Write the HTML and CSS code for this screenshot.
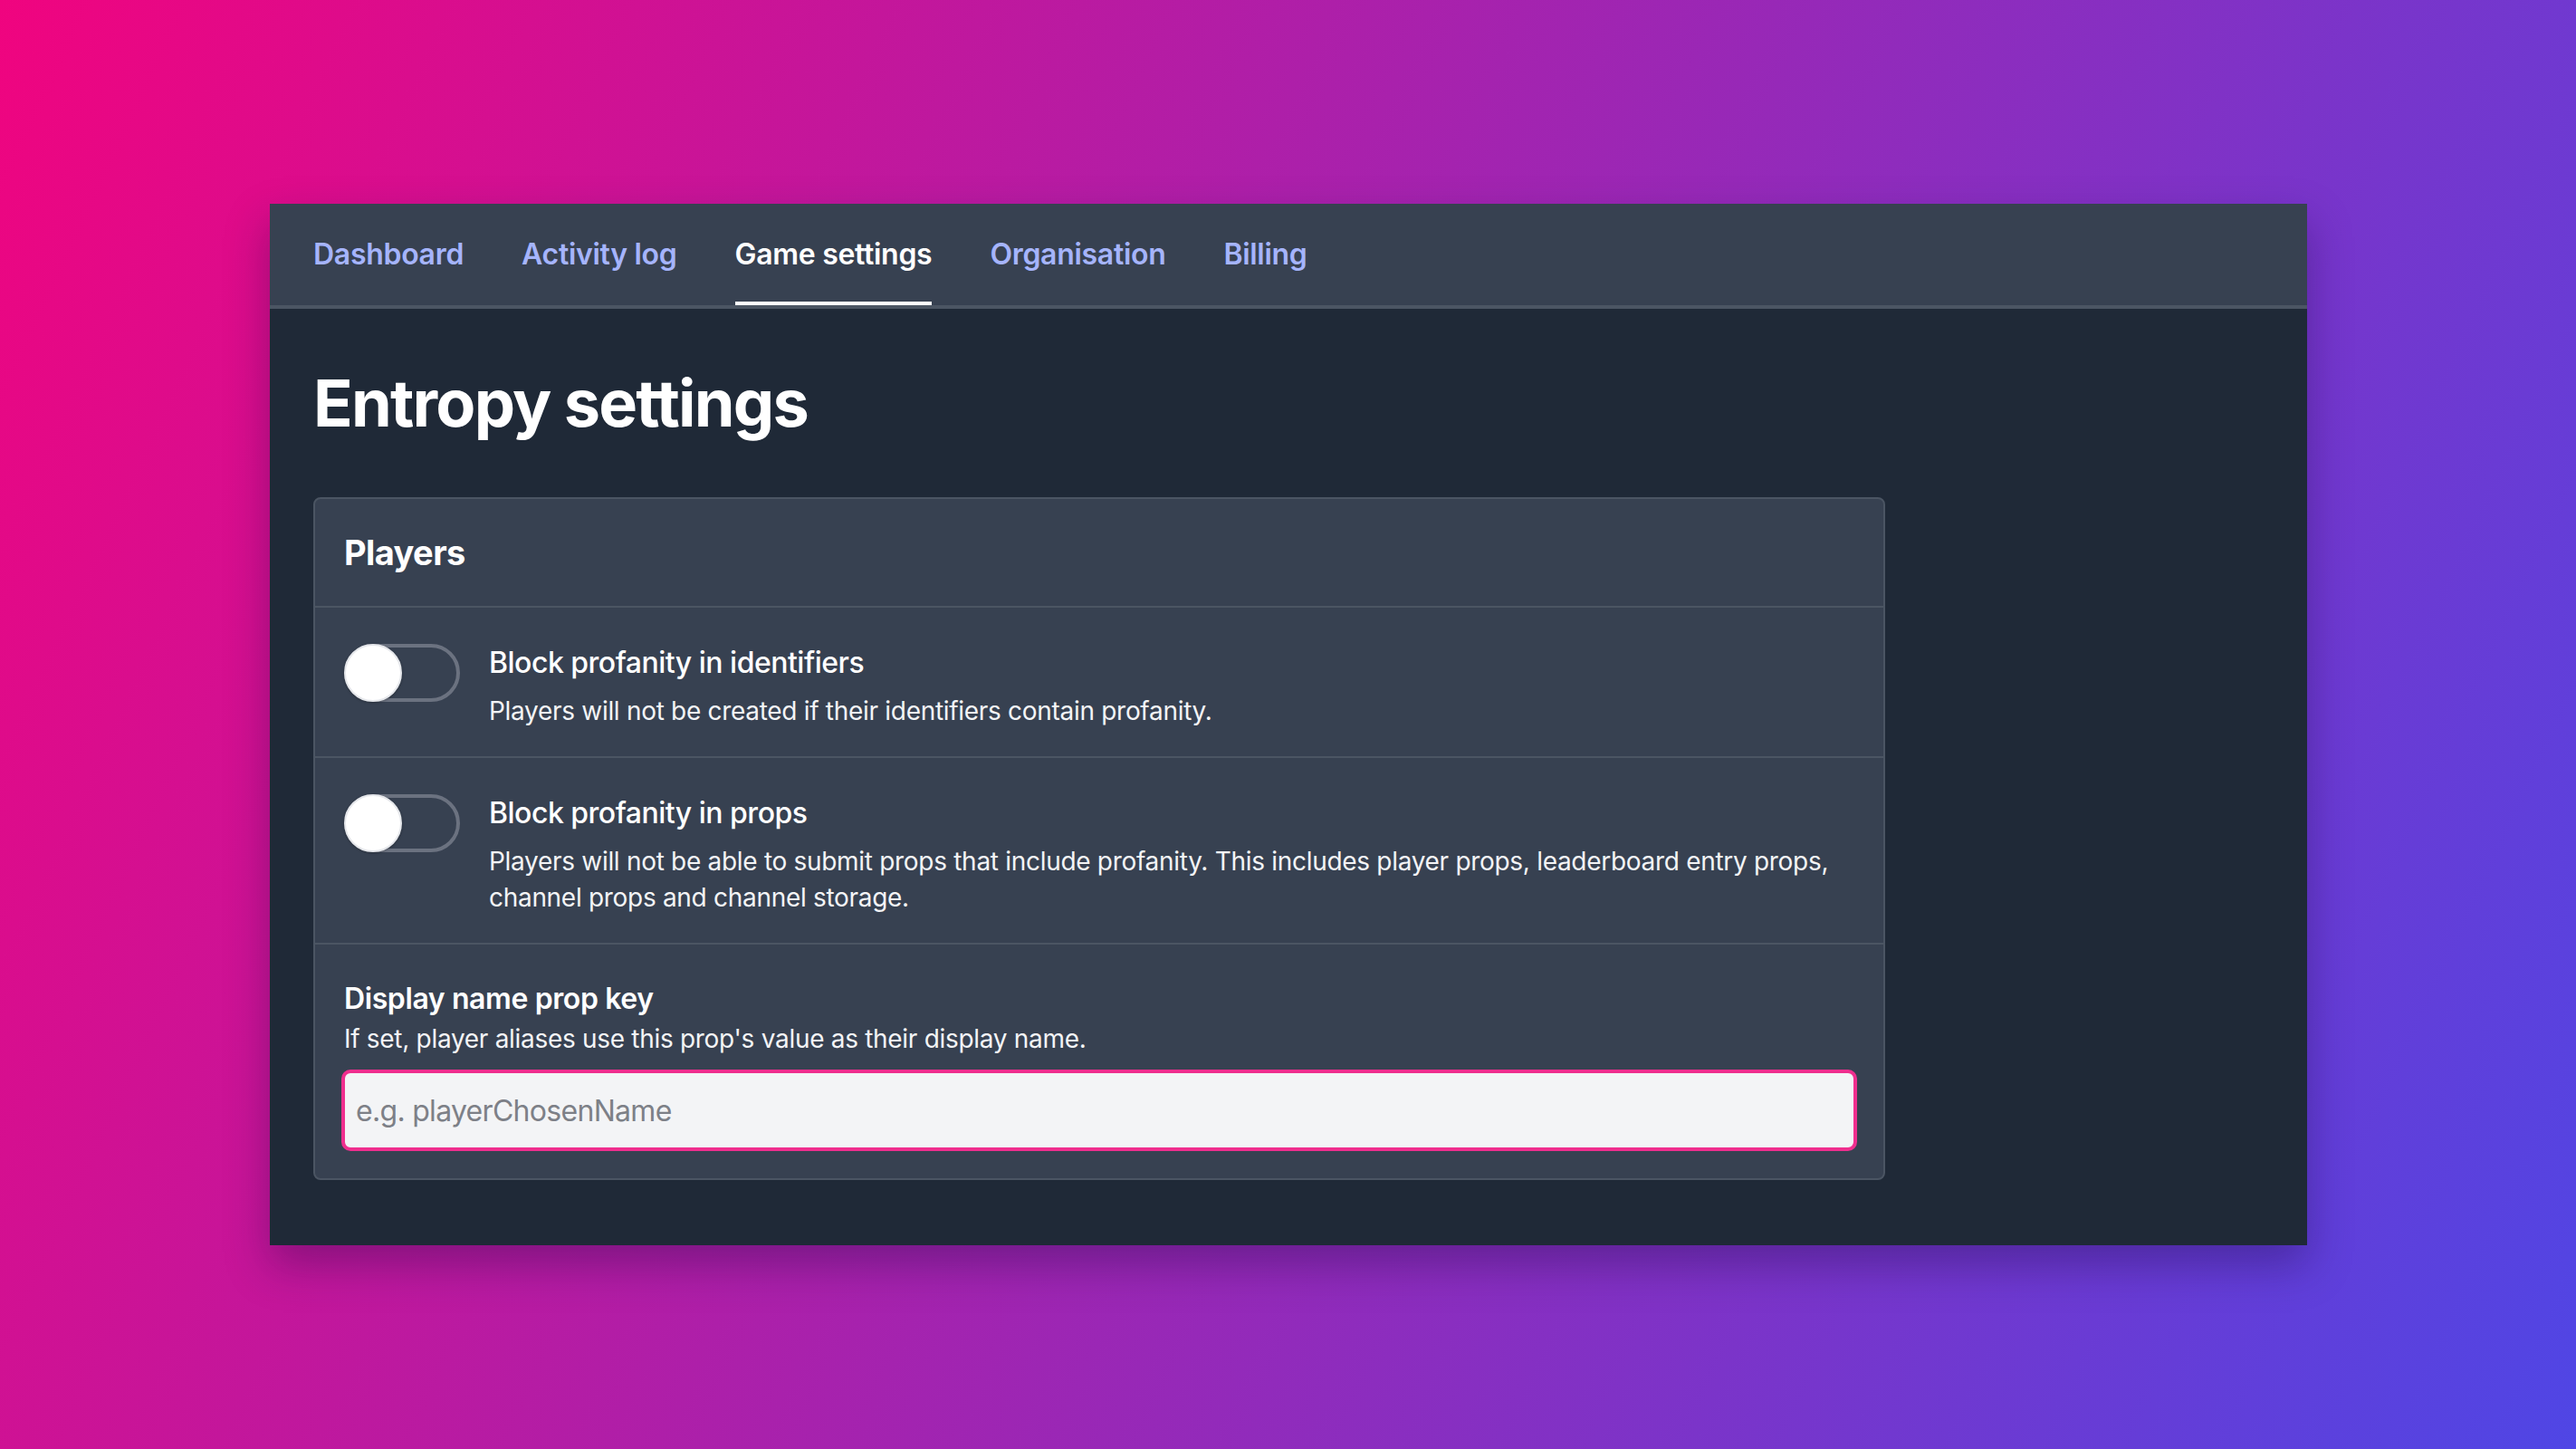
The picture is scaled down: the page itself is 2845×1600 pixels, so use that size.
FILE: index.html
```html
<!doctype html>
<html>
<head>
<meta charset="utf-8"/>
<title>Entropy settings</title>
<link rel="stylesheet" href="styles.css">
</head>
<body>
<div class="stage">
	<div class="window">
		<nav class="tabs">
			<a class="tab">Dashboard</a>
			<a class="tab">Activity log</a>
			<a class="tab active">Game settings</a>
			<a class="tab">Organisation</a>
			<a class="tab">Billing</a>
		</nav>
		<main class="main">
			<h1 class="title">Entropy settings</h1>
			<section class="card">
				<div class="card-head">Players</div>
				<div class="row">
					<span class="toggle"><span class="knob"></span></span>
					<div class="row-text">
						<div class="row-title">Block profanity in identifiers</div>
						<div class="row-desc">Players will not be created if their identifiers contain profanity.</div>
					</div>
				</div>
				<div class="row">
					<span class="toggle"><span class="knob"></span></span>
					<div class="row-text">
						<div class="row-title">Block profanity in props</div>
						<div class="row-desc">Players will not be able to submit props that include profanity. This includes player props, leaderboard entry props, channel props and channel storage.</div>
					</div>
				</div>
				<div class="field">
					<label class="field-label" for="propkey">Display name prop key</label>
					<div class="field-desc">If set, player aliases use this prop's value as their display name.</div>
					<input class="field-input" id="propkey" type="text" placeholder="e.g. playerChosenName">
				</div>
			</section>
		</main>
	</div>
</div>
</body>
</html>
```

FILE: styles.css
```css
html, body {
	margin: 0;
	height: 100%;
}
body {
	background: linear-gradient(115deg, #f0047f 0%, #4f46e5 100%);
	font-family: Inter, "Liberation Sans", sans-serif;
	color: #f9fafb;
	overflow: hidden;
}
.stage {
	padding: 225px 0 0 298px;
}
.window {
	width: 2250px;
	height: 1150px;
	background: #1f2937;
	box-shadow: 0 22px 44px rgba(30, 10, 70, 0.35);
}
.tabs {
	display: flex;
	gap: 64px;
	padding: 0 48px;
	background: #374151;
	border-bottom: 4px solid #4b5563;
}
.tab {
	font-size: 32px;
	line-height: 48px;
	font-weight: 600;
	letter-spacing: -0.3px;
	color: #a5b4fc;
	padding: 32px 0 28px;
	border-bottom: 4px solid transparent;
	cursor: pointer;
}
.tab.active {
	color: #fff;
	border-bottom-color: #fff;
}
.main {
	padding: 64px 48px;
}
.title {
	margin: 0 0 64px;
	font-size: 72px;
	line-height: 80px;
	font-weight: 700;
	letter-spacing: -1.8px;
	color: #fff;
}
.card {
	width: 1736px;
	box-sizing: border-box;
	background: #374151;
	border: 2px solid #4b5563;
	border-radius: 8px;
}
.card-head {
	padding: 32px;
	font-size: 38px;
	line-height: 54px;
	font-weight: 700;
	letter-spacing: -0.6px;
	color: #fff;
	border-bottom: 2px solid #4b5563;
}
.row {
	display: flex;
	gap: 32px;
	padding: 32px 32px 30px;
	border-bottom: 2px solid #4b5563;
}
.toggle {
	position: relative;
	flex: none;
	width: 128px;
	height: 64px;
	margin-top: 8px;
	box-sizing: border-box;
	border: 4px solid #6b7280;
	border-radius: 32px;
}
.knob {
	position: absolute;
	left: -4px;
	top: -4px;
	width: 64px;
	height: 64px;
	box-sizing: border-box;
	border-radius: 50%;
	background: #fff;
	border: 2px solid #e5e7eb;
	box-shadow: 0 1px 3px rgba(0, 0, 0, 0.3);
}
.row-title {
	margin-top: 5px;
	font-size: 32px;
	line-height: 48px;
	font-weight: 500;
	letter-spacing: -0.5px;
	color: #fff;
}
.row-desc {
	margin-top: 9px;
	font-size: 28px;
	line-height: 40px;
	letter-spacing: -0.3px;
	color: #f3f4f6;
}
.field {
	padding: 36px 32px 30px;
}
.field-label {
	display: block;
	font-size: 32px;
	line-height: 48px;
	font-weight: 600;
	letter-spacing: -0.4px;
	color: #fff;
}
.field-desc {
	font-size: 28px;
	line-height: 40px;
	letter-spacing: -0.3px;
	color: #f3f4f6;
}
.field-input {
	display: block;
	width: calc(100% + 6px);
	margin: 14px 0 0 -3px;
	height: 90px;
	box-sizing: border-box;
	padding: 0 12px;
	border: 4px solid #ef2e8e;
	border-radius: 10px;
	background: #f3f4f6;
	font-family: Inter, "Liberation Sans", sans-serif;
	font-size: 32px;
	letter-spacing: -0.7px;
	color: #111827;
	outline: none;
}
.field-input::placeholder {
	color: #7d8087;
}
```
